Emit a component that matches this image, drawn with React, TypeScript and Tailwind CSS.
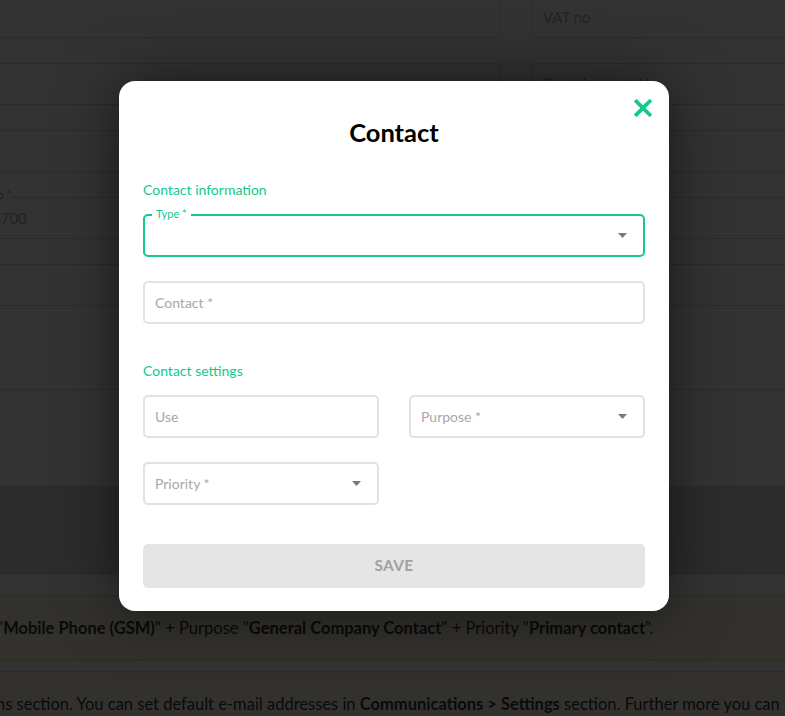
import React from "react";

const font = { fontFamily: "Lato, 'Noto Sans', 'Liberation Sans', sans-serif" };

function Caret() {
  return (
    <svg width="9" height="5" viewBox="0 0 9 5" className="shrink-0">
      <path d="M0 0 L9 0 L4.5 5 Z" fill="#7a7a7a" />
    </svg>
  );
}

function BgInput({ children, className = "" }: { children?: React.ReactNode; className?: string }) {
  return (
    <div className={`h-[42px] border border-[#d6d6d6] rounded-[5px] bg-white flex items-center text-[15px] text-[#aaa] ${className}`}>
      {children}
    </div>
  );
}

function Field({
  placeholder,
  select,
  active,
  label,
}: {
  placeholder?: string;
  select?: boolean;
  active?: boolean;
  label?: string;
}) {
  return (
    <div
      className={`relative h-[43px] rounded-[5px] border-2 flex items-center pl-[10px] pr-[16px] ${
        active ? "border-[#12c98e]" : "border-[#e2e2e2]"
      }`}
    >
      {label && (
        <span className="absolute -top-[9px] left-[7px] px-[4px] bg-white text-[11px] leading-[14px] text-[#12c98e]">
          {label}
        </span>
      )}
      <span className="flex-1 text-[14px] text-[#a8a8a8]">{placeholder}</span>
      {select && <Caret />}
    </div>
  );
}

export default function App() {
  return (
    <div className="relative w-[785px] h-[716px] overflow-hidden bg-white text-[#333]" style={font}>
      {/* page behind the dialog */}
      <div className="flex flex-col">
        <div className="bg-white pb-[96px]">
          <div className="grid grid-cols-[500px_1fr] gap-x-[31px] gap-y-[25px] -mt-[4px]">
            <BgInput className="-ml-[30px]" />
            <BgInput className="-mr-[30px] pl-[11px]">VAT no</BgInput>
            <BgInput className="-ml-[30px]" />
            <BgInput className="-mr-[30px] pl-[11px] items-start pt-[8px]">Bank Account No</BgInput>
            <BgInput className="-ml-[30px]" />
            <BgInput className="-mr-[30px]" />
            <div className="relative -ml-[30px]">
              <BgInput className="pl-[21px] text-[#222]">1700</BgInput>
              <span className="absolute -top-[9px] left-[20px] bg-white px-[1px] text-[11px] leading-[14px] text-[#999]">
                no *
              </span>
            </div>
            <BgInput className="-mr-[30px]" />
            <BgInput className="-ml-[30px]" />
            <BgInput className="-mr-[30px]" />
          </div>
          <div className="-mx-[30px] h-[84px] border border-t-0 border-[#d6d6d6] bg-white" />
        </div>
        <div className="h-[89px] bg-[#dcdcdc]" />
        <div className="h-[20px] bg-white" />
        <div className="h-[66px] bg-[#fff6df] border-y border-[#f3d49a] flex items-center text-[16.5px] whitespace-nowrap -ml-[3px]">
          <span>
            "<b>Mobile Phone (GSM)</b>" + Purpose "<b>General Company Contact</b>" + Priority "<b>Primary contact</b>".
          </span>
        </div>
        <div className="h-[10px] bg-white" />
        <div className="h-[60px] bg-[#fff6df] border-t border-[#f3d49a] pt-[20px] text-[16.5px] whitespace-nowrap -ml-[4px]">
          ns section. You can set default e-mail addresses in <b>Communications &gt; Settings</b> section. Further more you can set
        </div>
      </div>

      {/* dialog */}
      <div className="absolute inset-0 bg-black/80 flex justify-center items-start pt-[81px]">
        <div className="relative ml-[3px] w-[550px] bg-white rounded-[16px] px-6 pt-[35px] pb-[23px] shadow-[0_0_60px_rgba(0,0,0,0.55)]">
          <button className="absolute right-[17px] top-[18px] w-[18px] h-[18px]" aria-label="Close">
            <svg width="18" height="18" viewBox="0 0 18 18">
              <path d="M2.5 2.5 L15.5 15.5 M15.5 2.5 L2.5 15.5" stroke="#12c98e" strokeWidth="3.8" strokeLinecap="square" />
            </svg>
          </button>
          <h2 className="text-center text-[25.5px] leading-[32px] font-bold text-black">Contact</h2>
          <p className="mt-[32px] text-[14px] leading-[20px] text-[#12c98e]">Contact information</p>
          <div className="mt-[14px]">
            <Field active label="Type *" select />
          </div>
          <div className="mt-[24px]">
            <Field placeholder="Contact *" />
          </div>
          <p className="mt-[37px] text-[14px] leading-[20px] text-[#12c98e]">Contact settings</p>
          <div className="mt-[14px] grid grid-cols-2 gap-x-[30px]">
            <Field placeholder="Use" />
            <Field placeholder="Purpose *" select />
          </div>
          <div className="mt-[24px] grid grid-cols-2 gap-x-[30px]">
            <Field placeholder="Priority *" select />
          </div>
          <button className="mt-[39px] w-full h-[44px] rounded-[5px] bg-[#e5e5e5] text-[15.5px] font-bold text-[#a0a0a0] tracking-[0.3px]">
            SAVE
          </button>
        </div>
      </div>
    </div>
  );
}
